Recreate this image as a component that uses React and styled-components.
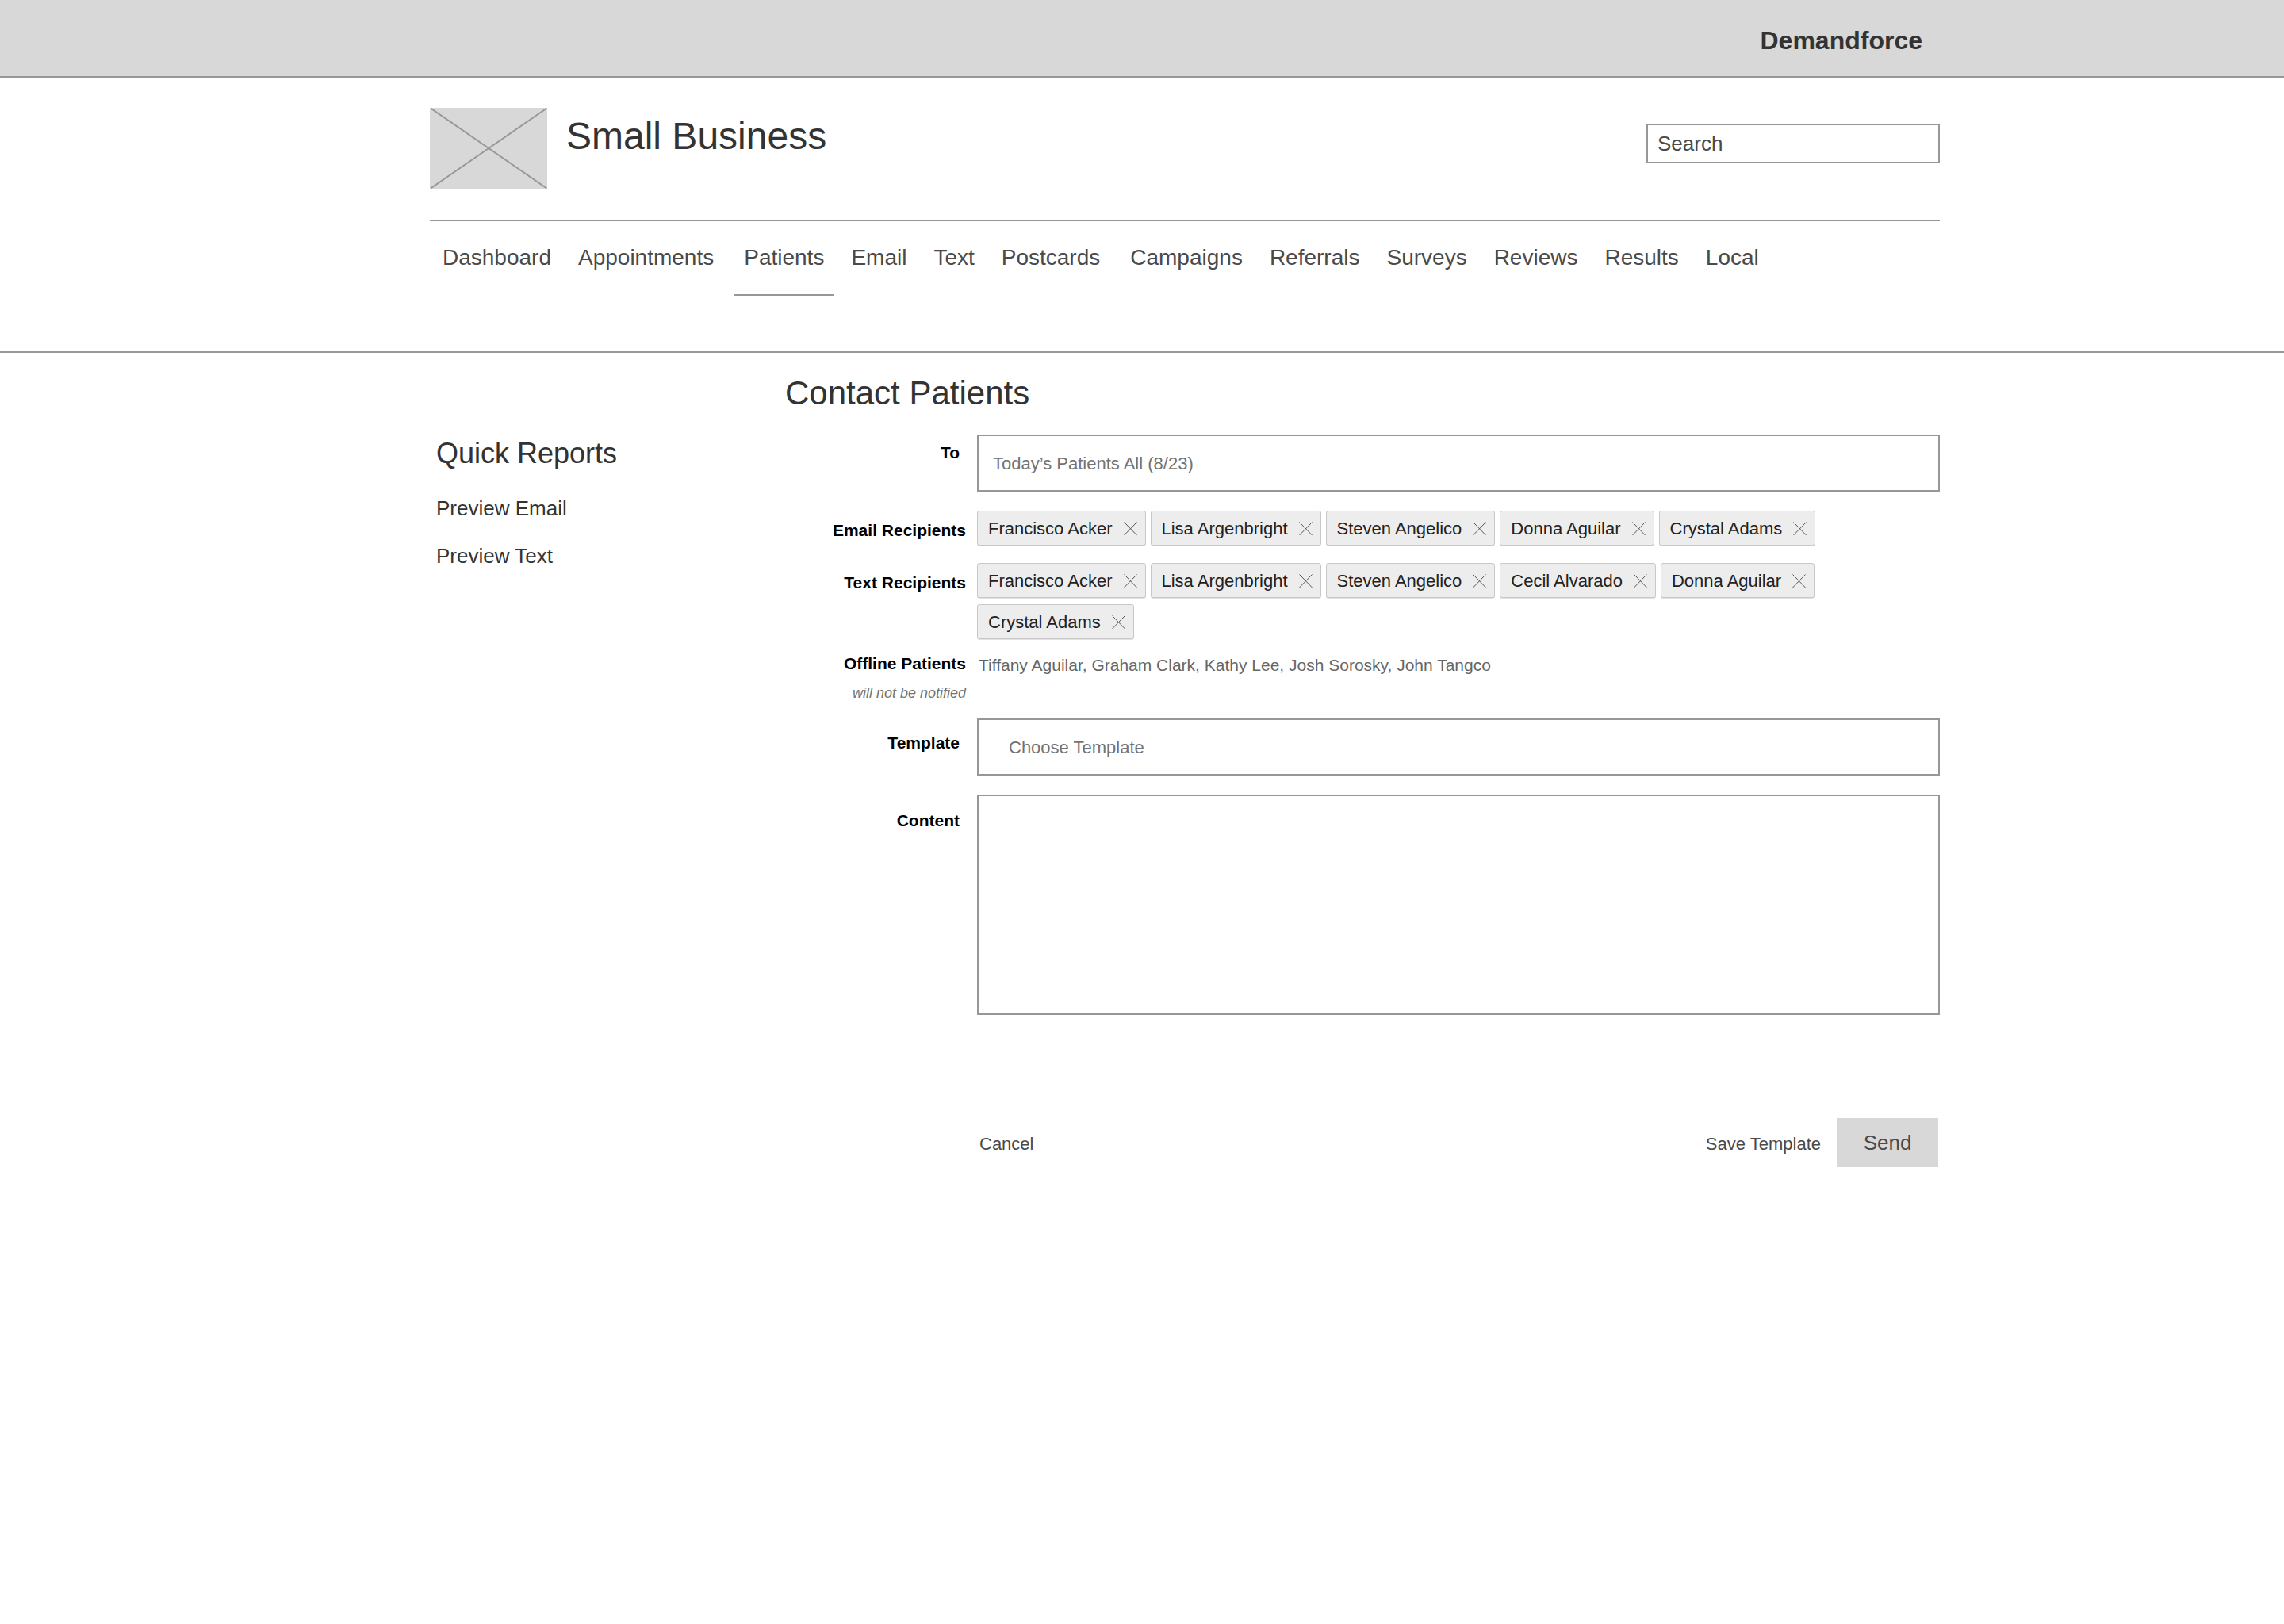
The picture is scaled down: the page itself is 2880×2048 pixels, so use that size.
import React from 'react';
import styled, { createGlobalStyle, css } from 'styled-components';

const ink = '#333333';
const soft = '#4a4a4a';
const muted = '#737373';
const line = '#979797';
const fill = '#d8d8d8';

const GlobalStyle = createGlobalStyle`
  *, *::before, *::after { box-sizing: border-box; }
  body {
    margin: 0;
    background: #ffffff;
    color: ${ink};
    font-family: "Liberation Sans", Arial, Helvetica, sans-serif;
    font-size: 22px;
    line-height: 26px;
  }
  input, select, textarea, button { font: inherit; color: inherit; border-radius: 0; margin: 0; }
  h1, h2, p, ul { margin: 0; padding: 0; }
  ul { list-style: none; }
`;

const shell = css`
  display: grid;
  grid-template-columns: minmax(24px, 542fr) minmax(0, 1904px) minmax(24px, 434fr);
  & > * { grid-column: 2; }
`;

const TopBar = styled.div`
  ${shell}
  background: ${fill};
  border-bottom: 2px solid ${line};
`;

const Brand = styled.p`
  padding: 33px 22px 27px 0;
  text-align: right;
  font-size: 32px;
  line-height: 36px;
  font-weight: 700;
`;

const Header = styled.header`
  ${shell}
  border-bottom: 2px solid ${line};
`;

const Masthead = styled.div`
  display: flex;
  align-items: flex-start;
  gap: 24px;
  padding: 38px 0 39px;
  border-bottom: 2px solid ${line};
`;

const Logo = styled.svg`
  flex: none;
  width: 148px;
  height: 102px;
  background: ${fill};
`;

const BusinessName = styled.h1`
  flex: 1;
  padding-top: 8px;
  font-size: 48px;
  line-height: 56px;
  font-weight: 400;
`;

const boxed = css`
  display: block;
  width: 100%;
  border: 2px solid ${line};
  background: #ffffff;
  outline: none;
  &::placeholder { color: inherit; opacity: 1; }
`;

const SearchForm = styled.form`
  width: 370px;
  padding-top: 20px;
`;

const SearchInput = styled.input`
  ${boxed}
  height: 50px;
  padding: 0 12px;
  font-size: 26px;
  color: ${soft};
`;

const Nav = styled.nav`
  display: flex;
  flex-wrap: wrap;
  padding: 0 4px 70px;
`;

const NavLink = styled.a`
  margin-right: ${(p) => (p.$wide ? 14 : 10)}px;
  padding: 29px 12px 29px;
  border-bottom: 2px solid ${(p) => (p.$active ? line : 'transparent')};
  font-size: 28px;
  line-height: 34px;
  color: ${soft};
  text-decoration: none;
`;

const Page = styled.div`
  ${shell}
`;

const Columns = styled.div`
  display: grid;
  grid-template-columns: 448px minmax(0, 1fr);
`;

const Sidebar = styled.aside`
  padding: 107px 8px 0;
`;

const SidebarTitle = styled.h2`
  font-size: 36px;
  line-height: 40px;
  font-weight: 400;
`;

const ReportList = styled.ul`
  display: grid;
  gap: 30px;
  margin-top: 34px;
`;

const ReportLink = styled.a`
  font-size: 26px;
  line-height: 30px;
  display: block;
  color: ${ink};
  text-decoration: none;
`;

const Main = styled.main`
  padding: 27px 0 80px;
`;

const PageTitle = styled.h2`
  margin-bottom: 28px;
  font-size: 42px;
  line-height: 48px;
  font-weight: 400;
`;

const Row = styled.div`
  display: grid;
  grid-template-columns: 242px minmax(0, 1fr);
  margin-bottom: ${(p) => p.$gap}px;
`;

const LabelCell = styled.div`
  padding: ${(p) => p.$drop || 0}px ${(p) => (p.$field ? 22 : 14)}px 0 0;
  text-align: right;
`;

const labelText = css`
  display: block;
  color: #000000;
  font-size: 21px;
  font-weight: 700;
`;

const Label = styled.label`${labelText}`;
const Caption = styled.p`${labelText}`;

const Note = styled.p`
  margin-top: 13px;
  font-size: 18px;
  line-height: 22px;
  font-style: italic;
  color: ${muted};
`;

const TextInput = styled.input`
  ${boxed}
  height: 72px;
  padding: 2px 18px 0;
  color: ${muted};
`;

const Select = styled.select`
  ${boxed}
  appearance: none;
  height: 72px;
  padding: 2px 38px 0;
  color: ${muted};
`;

const TextArea = styled.textarea`
  ${boxed}
  height: 278px;
  padding: 18px;
  resize: none;
`;

const ChipList = styled.ul`
  display: flex;
  flex-wrap: wrap;
  gap: 8px 6px;
`;

const Chip = styled.li`
  display: flex;
  align-items: center;
  gap: 14px;
  height: 44px;
  padding: 2px 10px 0 13px;
  border: 1px solid #c8c8c8;
  border-radius: 3px;
  background: #ededed;
  box-shadow: 0 1px 0 #e2e2e2;
  color: #222222;
  white-space: nowrap;
`;

const RemoveButton = styled.button`
  display: flex;
  padding: 0;
  border: 0;
  background: none;
  color: #555555;
  cursor: pointer;
`;

const OfflineNames = styled.p`
  padding: 2px 0 0 2px;
  font-size: 21px;
  color: #666666;
`;

const Actions = styled.div`
  display: flex;
  align-items: baseline;
  gap: 20px;
  padding: 130px 2px 0 245px;
`;

const TextButton = styled.button`
  padding: 0;
  border: 0;
  background: none;
  color: ${soft};
  cursor: pointer;
  margin-right: ${(p) => (p.$push ? 'auto' : 0)};
`;

const SendButton = styled.button`
  width: 128px;
  height: 62px;
  padding: 0;
  border: 0;
  background: ${fill};
  font-size: 26px;
  color: ${soft};
  cursor: pointer;
`;

const navItems = [
  { name: 'Dashboard' },
  { name: 'Appointments', wide: true },
  { name: 'Patients', active: true },
  { name: 'Email' },
  { name: 'Text' },
  { name: 'Postcards', wide: true },
  { name: 'Campaigns' },
  { name: 'Referrals' },
  { name: 'Surveys' },
  { name: 'Reviews' },
  { name: 'Results' },
  { name: 'Local' },
];

const emailRecipients = [
  'Francisco Acker',
  'Lisa Argenbright',
  'Steven Angelico',
  'Donna Aguilar',
  'Crystal Adams',
];

const textRecipients = [
  'Francisco Acker',
  'Lisa Argenbright',
  'Steven Angelico',
  'Cecil Alvarado',
  'Donna Aguilar',
  'Crystal Adams',
];

function Recipients({ names }) {
  return (
    <ChipList>
      {names.map((name) => (
        <Chip key={name}>
          {name}
          <RemoveButton type="button" aria-label={`Remove ${name}`}>
            <svg width="17" height="20" viewBox="0 0 17 20" fill="none" stroke="currentColor">
              <path d="M0.5 1.5 L16.5 18 M16.5 1.5 L0.5 18" />
            </svg>
          </RemoveButton>
        </Chip>
      ))}
    </ChipList>
  );
}

export default function App() {
  return (
    <>
      <GlobalStyle />
      <TopBar>
        <Brand>Demandforce</Brand>
      </TopBar>

      <Header>
        <Masthead>
          <Logo viewBox="0 0 148 102" fill="none" stroke={line} strokeWidth="2" aria-hidden="true">
            <path d="M1 0.5 L147.5 101.5 M147.5 0.5 L1 101.5" />
          </Logo>
          <BusinessName>Small Business</BusinessName>
          <SearchForm role="search">
            <SearchInput type="text" placeholder="Search" aria-label="Search" />
          </SearchForm>
        </Masthead>
        <Nav>
          {navItems.map((item) => (
            <NavLink key={item.name} href="#" $active={item.active} $wide={item.wide}>
              {item.name}
            </NavLink>
          ))}
        </Nav>
      </Header>

      <Page>
        <Columns>
          <Sidebar>
            <SidebarTitle>Quick Reports</SidebarTitle>
            <ReportList>
              <li><ReportLink href="#">Preview Email</ReportLink></li>
              <li><ReportLink href="#">Preview Text</ReportLink></li>
            </ReportList>
          </Sidebar>

          <Main>
            <PageTitle>Contact Patients</PageTitle>
            <form>
              <Row $gap={24}>
                <LabelCell $drop={10} $field><Label htmlFor="to">To</Label></LabelCell>
                <TextInput id="to" type="text" defaultValue="Today’s Patients All (8/23)" />
              </Row>
              <Row $gap={22}>
                <LabelCell $drop={12}><Caption>Email Recipients</Caption></LabelCell>
                <Recipients names={emailRecipients} />
              </Row>
              <Row $gap={18}>
                <LabelCell $drop={12}><Caption>Text Recipients</Caption></LabelCell>
                <Recipients names={textRecipients} />
              </Row>
              <Row $gap={21}>
                <LabelCell>
                  <Caption>Offline Patients</Caption>
                  <Note>will not be notified</Note>
                </LabelCell>
                <OfflineNames>
                  Tiffany Aguilar, Graham Clark, Kathy Lee, Josh Sorosky, John Tangco
                </OfflineNames>
              </Row>
              <Row $gap={24}>
                <LabelCell $drop={18} $field><Label htmlFor="template">Template</Label></LabelCell>
                <Select id="template" defaultValue="">
                  <option value="">Choose Template</option>
                </Select>
              </Row>
              <Row $gap={0}>
                <LabelCell $drop={20} $field><Label htmlFor="content">Content</Label></LabelCell>
                <TextArea id="content" />
              </Row>
              <Actions>
                <TextButton type="button" $push>Cancel</TextButton>
                <TextButton type="button">Save Template</TextButton>
                <SendButton type="submit">Send</SendButton>
              </Actions>
            </form>
          </Main>
        </Columns>
      </Page>
    </>
  );
}
